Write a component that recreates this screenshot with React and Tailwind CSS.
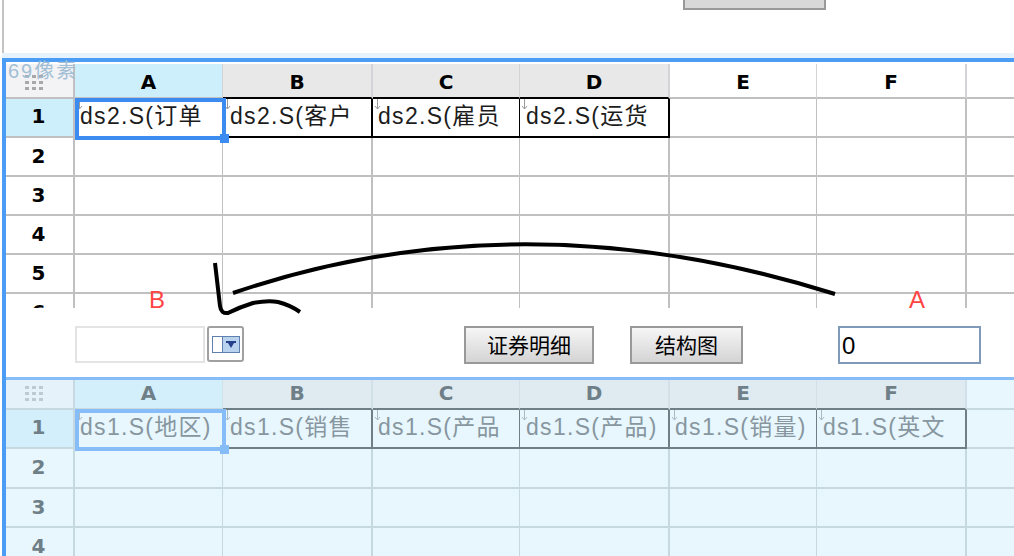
const FONT = "font-['Liberation_Sans','Noto_Sans_CJK_SC',sans-serif]";
const HEAD_FONT = "font-['DejaVu_Sans',sans-serif] font-bold text-[20px] leading-none";
const COLS = [
  { name: "A", w: "w-[148px]", r: "border-r", pl: "pl-[5px]" },
  { name: "B", w: "w-[150px]", r: "border-r-2", pl: "pl-[7px]" },
  { name: "C", w: "w-[147px]", r: "border-r", pl: "pl-[5px]" },
  { name: "D", w: "w-[150px]", r: "border-r-2", pl: "pl-[6px]" },
  { name: "E", w: "w-[147px]", r: "border-r", pl: "pl-[5px]" },
  { name: "F", w: "w-[150px]", r: "border-r-2", pl: "pl-[6px]" },
];

const TOP = {
  line: "border-[#c0c0c0]",
  box: "border-black",
  boxBottom: "border-b-black",
  lineBottom: "border-b-[#c0c0c0]",
  headSep: "border-r-[#d4d4d8]",
  text: "text-[#1c1c1c]",
  head: "text-black",
  corner: "bg-[#f3f3f5]",
  selHead: "bg-[#cdeefb]",
  headBg: "bg-[#e8e8e8]",
  plainHead: "bg-white",
  arrow: "#999999",
  dots: "bg-[#a8a8a8]",
  sel: "border-[#3b8bf0]",
  handle: "bg-[#3b8bf0]",
};

const BOTTOM = {
  line: "border-[#c6d8e0]",
  box: "border-[#6f7f88]",
  boxBottom: "border-b-[#6f7f88]",
  lineBottom: "border-b-[#c6d8e0]",
  headSep: "border-r-[#d2e0e8]",
  text: "text-[#87969f]",
  head: "text-[#6f7f88]",
  corner: "bg-[#e6f2f9]",
  selHead: "bg-[#d3effc]",
  headBg: "bg-[#dfeaf1]",
  plainHead: "bg-[#dfeaf1]",
  arrow: "#a9bac3",
  dots: "bg-[#bccbd3]",
  sel: "border-[#86bcf8]",
  handle: "bg-[#86bcf8]",
};

function Sheet({ theme, cells, boxedHead, rows, tallFirst }) {
  return (
    <div className="relative">
      {/* header row */}
      <div className="flex h-[35px]">
        <div className={`w-[69px] shrink-0 flex items-center justify-center pr-[12px] pt-[3px] border-b-2 border-r-2 ${theme.line} ${theme.corner}`}>
          <div className="grid grid-cols-3 gap-[3px]">
            {Array.from({ length: 9 }).map((_, i) => (
              <span key={i} className={`w-[4px] h-[3px] ${theme.dots}`} />
            ))}
          </div>
        </div>
        {COLS.map((c, i) => {
          const boxed = i > 0 && i < cells.length;
          let bg = theme.plainHead;
          if (i === 0) bg = theme.selHead;
          else if (i < boxedHead) bg = theme.headBg;
          return (
            <div
              key={c.name}
              className={`${c.w} ${c.r} shrink-0 flex items-center justify-center pt-[3px] border-b-2 ${theme.headSep} ${boxed ? theme.boxBottom : theme.lineBottom} ${bg}`}
            >
              <span className={`${HEAD_FONT} ${theme.head}`}>{c.name}</span>
            </div>
          );
        })}
        <div className={`flex-1 border-b-2 ${theme.line}`} />
      </div>

      {/* row 1 with the data cells */}
      <div className="flex h-[39px]">
        <div className={`w-[69px] shrink-0 flex items-center justify-center pr-[2px] pb-[3px] border-b-2 border-r-2 ${theme.line} ${theme.selHead}`}>
          <span className={`${HEAD_FONT} ${theme.head}`}>1</span>
        </div>
        {COLS.map((c, i) => {
          const text = cells[i];
          return (
            <div
              key={c.name}
              className={`${c.w} ${c.r} ${c.pl} shrink-0 relative flex items-center pb-[2px] whitespace-nowrap border-b-2 ${text ? theme.box : theme.line}`}
            >
              {text && (
                <svg className="absolute left-[1px] top-0" width="7" height="11" viewBox="0 0 7 11" fill="none" stroke={theme.arrow} strokeWidth="1">
                  <path d="M3.5 0v10M1 7l2.5 3L6 7" />
                </svg>
              )}
              {text && <span className={`${FONT} text-[23px] tracking-[1.3px] leading-normal ${theme.text}`}>{text}</span>}
            </div>
          );
        })}
        <div className={`flex-1 border-b-2 ${theme.line}`} />
      </div>

      {/* empty rows */}
      {rows.map((r, idx) => (
        <div key={r} className={`flex ${tallFirst && idx === 0 ? "h-[40px]" : "h-[39px]"}`}>
          <div className={`w-[69px] shrink-0 flex items-center justify-center pr-[2px] pb-[2px] border-b-2 border-r-2 ${theme.line}`}>
            <span className={`${HEAD_FONT} ${theme.head}`}>{r}</span>
          </div>
          {COLS.map((c) => (
            <div key={c.name} className={`${c.w} ${c.r} shrink-0 border-b-2 ${theme.line}`} />
          ))}
          <div className={`flex-1 border-b-2 ${theme.line}`} />
        </div>
      ))}

      {/* current cell */}
      <div className={`absolute left-[69px] top-[34px] w-[151px] h-[42px] border-[4px] ${theme.sel}`} />
      <div className={`absolute left-[214px] top-[70px] w-[9px] h-[9px] ${theme.handle}`} />
    </div>
  );
}

function GrayButton({ label, className }) {
  return (
    <button className={`h-[38px] pt-[1px] border-2 border-[#999999] bg-gradient-to-b from-[#f6f6f6] to-[#d4d4d4] text-[21px] leading-none text-black ${FONT} ${className}`}>
      {label}
    </button>
  );
}

export default function App() {
  return (
    <div className={`relative w-[1014px] h-[556px] overflow-hidden bg-white flex flex-col ${FONT}`}>
      {/* report toolbar above the sheet */}
      <div className="h-[53px] ml-[2px] border-l-2 border-[#c4c4c4] pl-[679px]">
        <div className="w-[143px] h-[10px] border-2 border-t-0 border-[#999999] bg-[#d8d8d8]" />
      </div>
      <div className="h-[5px] ml-[2px] bg-[#e6f2fc]" />

      <div className="flex-1 min-h-0 ml-[2px] flex flex-col border-l-4 border-[#4a9cf5]">
        <div className="h-[4px] -ml-[4px] bg-[#4a9cf5] shrink-0" />
        <div className="h-[2px] shrink-0" />

        {/* top sheet, cut off at row 6 */}
        <div className="h-[244px] overflow-hidden shrink-0">
          <Sheet
            theme={TOP}
            cells={["ds2.S(订单", "ds2.S(客户", "ds2.S(雇员", "ds2.S(运货"]}
            boxedHead={4}
            rows={[2, 3, 4, 5, 6]}
          />
        </div>

        {/* parameter bar */}
        <div className="h-[69px] shrink-0 flex items-start pt-[18px] pl-[69px]">
          <div className="w-[130px] h-[37px] border-2 border-[#e4e4e4] bg-white" />
          <div className="ml-[2px] w-[37px] h-[36px] rounded-[3px] border-2 border-[#a0a0a0] grid place-items-center">
            <div className="flex w-[28px] h-[17px] border border-[#5f7fae]">
              <div className="w-[10px] bg-white border-r border-[#5f7fae]" />
              <div className="flex-1 bg-[#b9d3ee] grid place-items-center">
                <svg width="10" height="7" viewBox="0 0 10 7"><path d="M0 0h10v2H8L5 7 2 2H0z" fill="#27408b" /></svg>
              </div>
            </div>
          </div>
          <GrayButton label="证券明细" className="ml-[220px] w-[130px]" />
          <GrayButton label="结构图" className="ml-[36px] w-[113px]" />
          <div className="ml-[95px] w-[143px] h-[38px] pt-[2px] border-2 border-[#7f9ab8] flex items-center pl-[2px] text-[24px] leading-none text-black">
            0
          </div>
        </div>

        {/* bottom sheet, faded */}
        <div className="flex-1 min-h-0 overflow-hidden bg-[#e8f6fd] border-t-[3px] border-[#86bcf8]">
          <div className="h-[1px]" />
          <div className="-mt-[6px]">
            <Sheet
              theme={BOTTOM}
              cells={["ds1.S(地区)", "ds1.S(销售", "ds1.S(产品", "ds1.S(产品)", "ds1.S(销量)", "ds1.S(英文"]}
              boxedHead={6}
              rows={[2, 3, 4]}
              tallFirst
            />
          </div>
        </div>
      </div>

      {/* overlays: measure label, red markers and the hand drawn arrow */}
      <span className="absolute left-[8px] top-[61px] text-[20px] leading-none tracking-[2px] text-[#a3bfd6]">69像素</span>
      <span className="absolute left-[149px] top-[288px] text-[24px] leading-none text-[#ff4444]">B</span>
      <span className="absolute left-[909px] top-[288px] text-[24px] leading-none text-[#ff4444]">A</span>
      <svg className="absolute left-0 top-0 pointer-events-none" width="1014" height="556" fill="none" stroke="#000" strokeWidth="4">
        <path d="M233 293Q520 195 835 294" />
        <path d="M215 263L220 306Q221 314 228 313Q240 307 253 303Q268 300 278 302Q290 305 300 312" />
      </svg>
    </div>
  );
}
